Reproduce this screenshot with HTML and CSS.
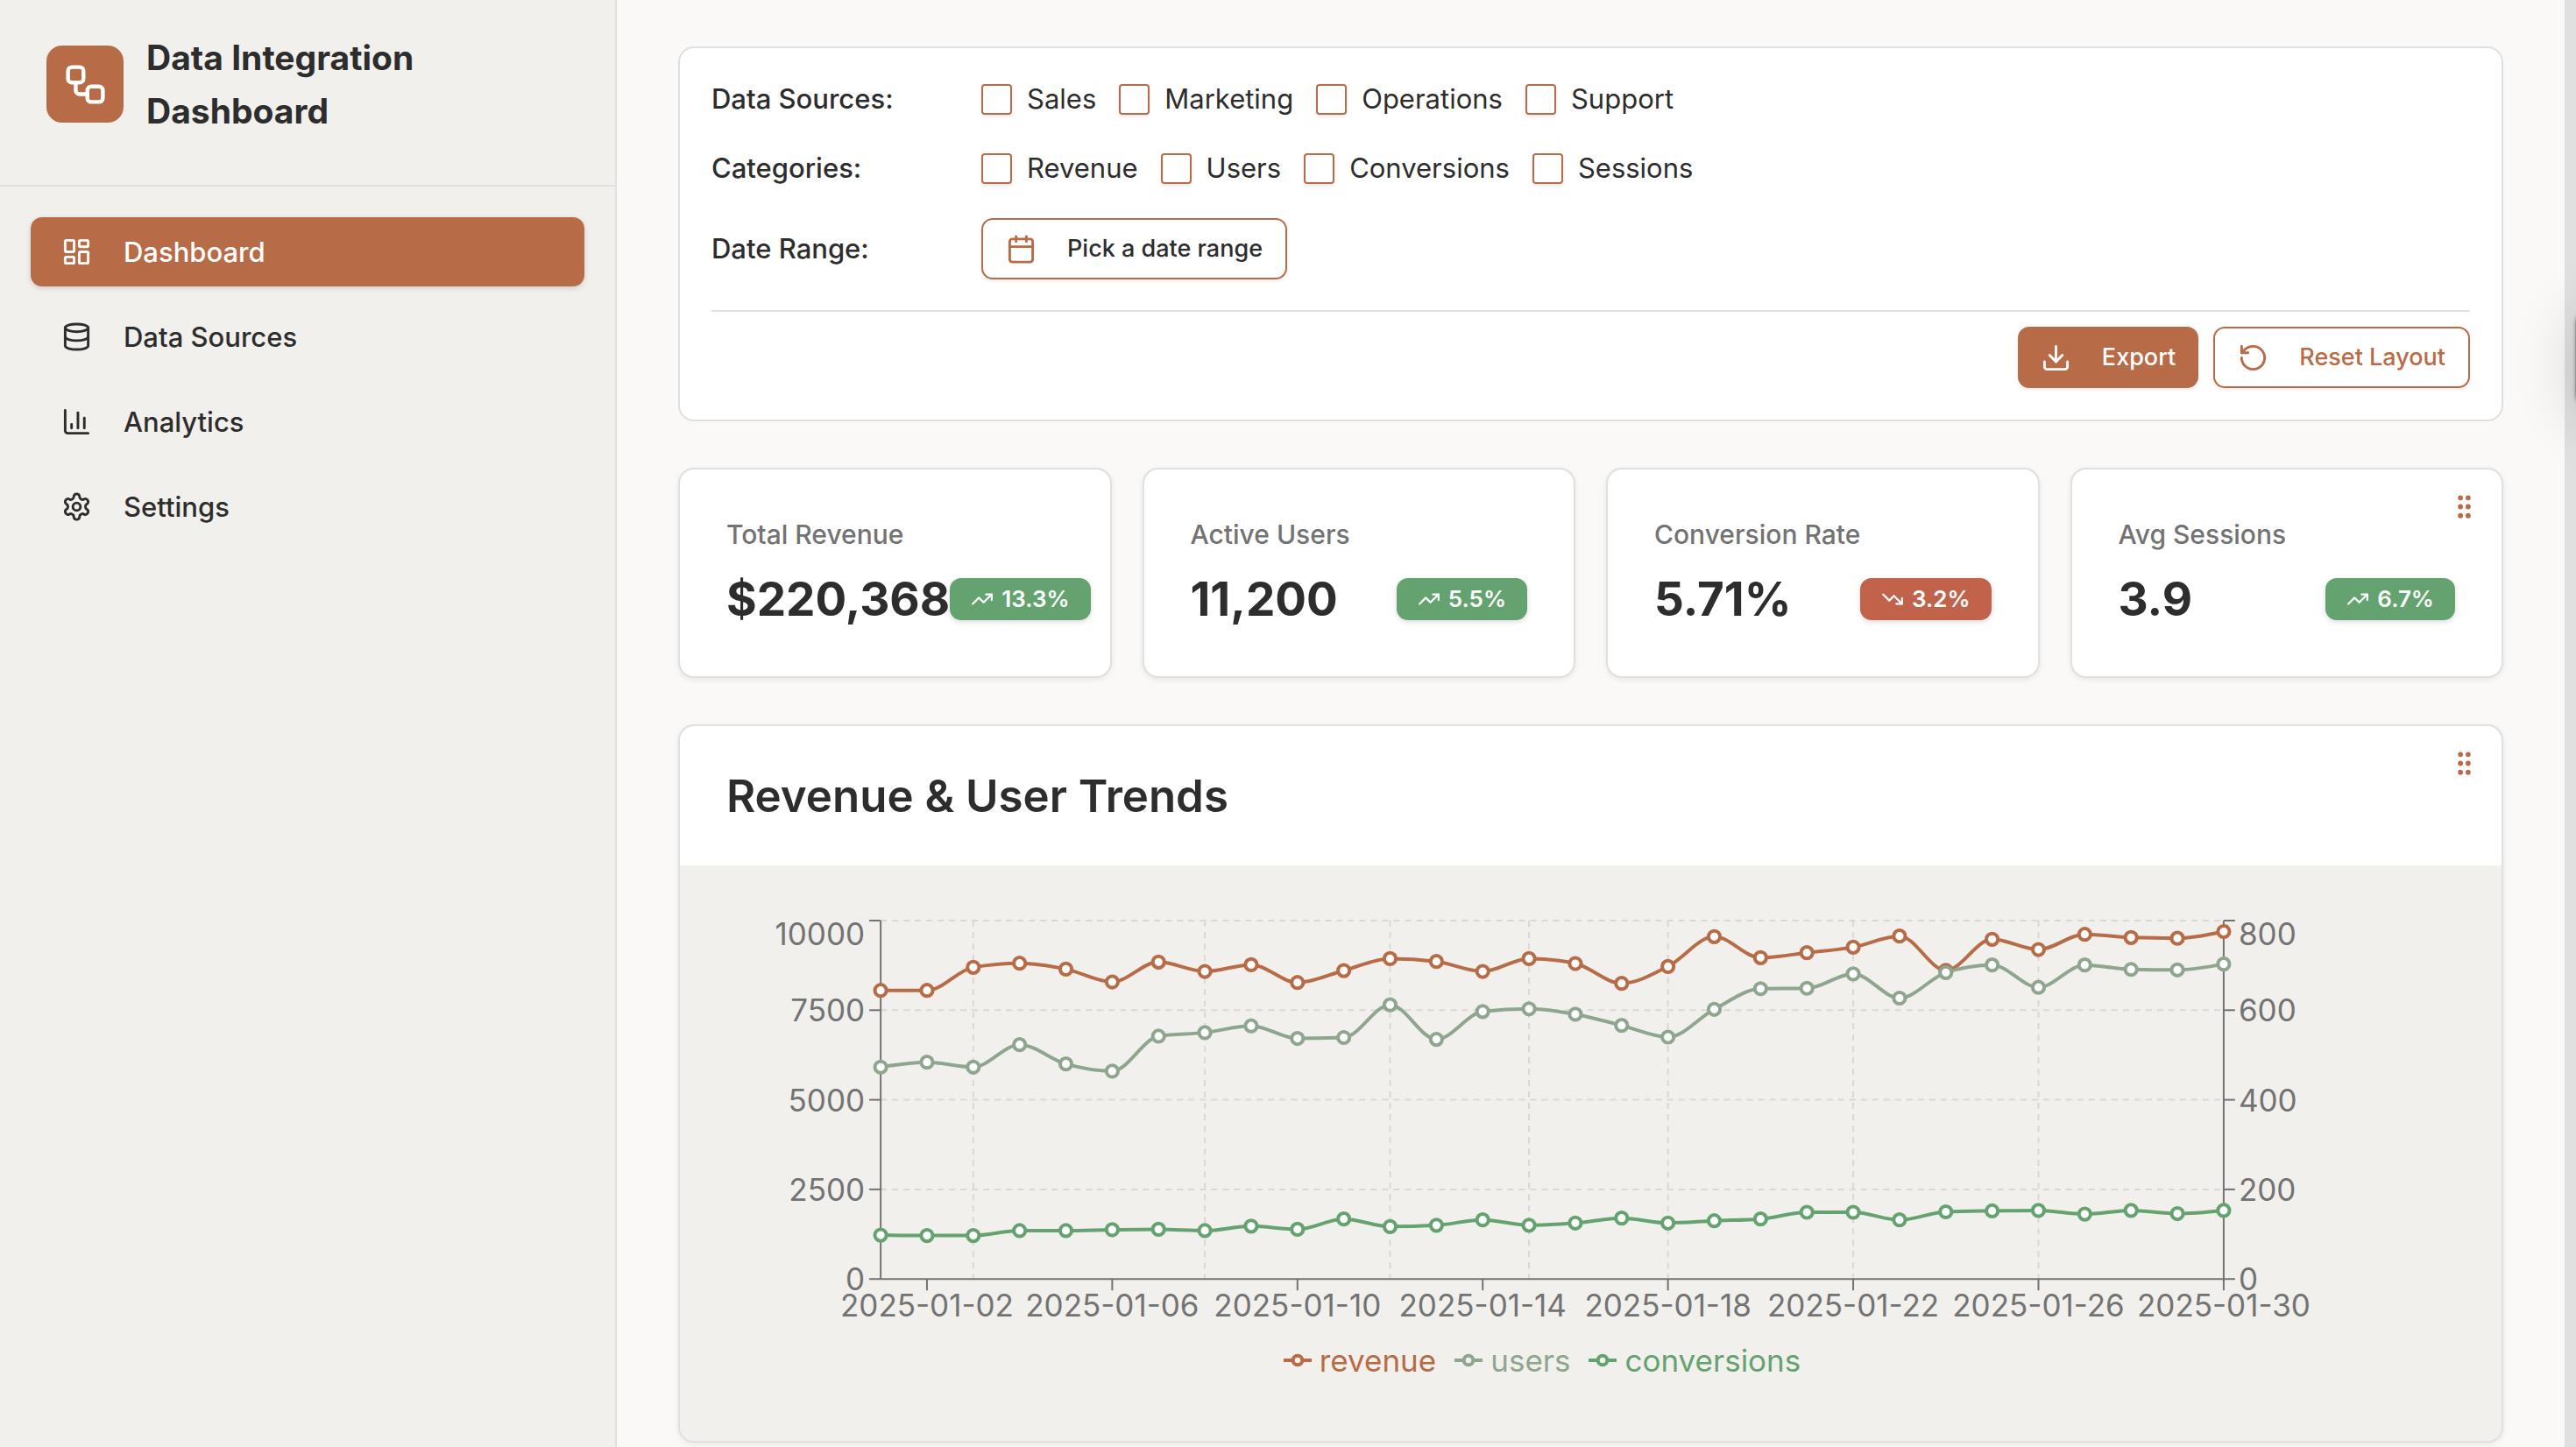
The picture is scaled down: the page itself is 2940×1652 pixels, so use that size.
FILE: index.html
```
<!DOCTYPE html>
<html lang="en">
<head>
  <meta charset="UTF-8">
  <meta name="viewport" content="width=device-width, initial-scale=1.0">
  <title>Data Integration Dashboard</title>
  <link rel="stylesheet" href="styles.css">
</head>
<body>

  <aside class="sidebar">
    <div class="brand">
      <div class="brand-logo">
        <svg class="icon-large" viewBox="0 0 24 24"><rect width="8" height="8" x="3" y="3" rx="2"/><path d="M7 11v4a2 2 0 0 0 2 2h4"/><rect width="8" height="8" x="13" y="13" rx="2"/></svg>
      </div>
      <h1>Data Integration Dashboard</h1>
    </div>
    <nav class="nav">
      <a class="nav-item active" href="#dashboard">
        <svg class="icon" viewBox="0 0 24 24"><rect width="7" height="9" x="3" y="3" rx="1"/><rect width="7" height="5" x="14" y="3" rx="1"/><rect width="7" height="9" x="14" y="12" rx="1"/><rect width="7" height="5" x="3" y="16" rx="1"/></svg>
        Dashboard
      </a>
      <a class="nav-item" href="#sources">
        <svg class="icon" viewBox="0 0 24 24"><ellipse cx="12" cy="5" rx="9" ry="3"/><path d="M3 5V19A9 3 0 0 0 21 19V5"/><path d="M3 12A9 3 0 0 0 21 12"/></svg>
        Data Sources
      </a>
      <a class="nav-item" href="#analytics">
        <svg class="icon" viewBox="0 0 24 24"><path d="M3 3v16a2 2 0 0 0 2 2h16"/><path d="M18 17V9"/><path d="M13 17V5"/><path d="M8 17v-3"/></svg>
        Analytics
      </a>
      <a class="nav-item" href="#settings">
        <svg class="icon" viewBox="0 0 24 24"><path d="M12.22 2h-.44a2 2 0 0 0-2 2v.18a2 2 0 0 1-1 1.73l-.43.25a2 2 0 0 1-2 0l-.15-.08a2 2 0 0 0-2.73.73l-.22.38a2 2 0 0 0 .73 2.73l.15.1a2 2 0 0 1 1 1.72v.51a2 2 0 0 1-1 1.74l-.15.09a2 2 0 0 0-.73 2.73l.22.38a2 2 0 0 0 2.73.73l.15-.08a2 2 0 0 1 2 0l.43.25a2 2 0 0 1 1 1.73V20a2 2 0 0 0 2 2h.44a2 2 0 0 0 2-2v-.18a2 2 0 0 1 1-1.73l.43-.25a2 2 0 0 1 2 0l.15.08a2 2 0 0 0 2.73-.73l.22-.39a2 2 0 0 0-.73-2.73l-.15-.08a2 2 0 0 1-1-1.74v-.5a2 2 0 0 1 1-1.74l.15-.09a2 2 0 0 0 .73-2.73l-.22-.38a2 2 0 0 0-2.73-.73l-.15.08a2 2 0 0 1-2 0l-.43-.25a2 2 0 0 1-1-1.73V4a2 2 0 0 0-2-2z"/><circle cx="12" cy="12" r="3"/></svg>
        Settings
      </a>
    </nav>
  </aside>

  <main class="main">
    <section class="card filters">
      <div class="filter-row">
        <span class="filter-label">Data Sources:</span>
        <div class="options">
          <label class="option"><input type="checkbox" name="source"> Sales</label>
          <label class="option"><input type="checkbox" name="source"> Marketing</label>
          <label class="option"><input type="checkbox" name="source"> Operations</label>
          <label class="option"><input type="checkbox" name="source"> Support</label>
        </div>
      </div>
      <div class="filter-row">
        <span class="filter-label">Categories:</span>
        <div class="options">
          <label class="option"><input type="checkbox" name="category"> Revenue</label>
          <label class="option"><input type="checkbox" name="category"> Users</label>
          <label class="option"><input type="checkbox" name="category"> Conversions</label>
          <label class="option"><input type="checkbox" name="category"> Sessions</label>
        </div>
      </div>
      <div class="filter-row">
        <span class="filter-label">Date Range:</span>
        <button class="button button-date" type="button">
          <svg class="icon" viewBox="0 0 24 24"><path d="M8 2v4"/><path d="M16 2v4"/><rect width="18" height="18" x="3" y="4" rx="2"/><path d="M3 10h18"/></svg>
          Pick a date range
        </button>
      </div>
      <div class="actions">
        <button class="button button-primary" type="button">
          <svg class="icon" viewBox="0 0 24 24"><path d="M21 15v4a2 2 0 0 1-2 2H5a2 2 0 0 1-2-2v-4"/><path d="m7 10 5 5 5-5"/><path d="M12 15V3"/></svg>
          Export
        </button>
        <button class="button" type="button">
          <svg class="icon" viewBox="0 0 24 24"><path d="M3 12a9 9 0 1 0 9-9 9.75 9.75 0 0 0-6.74 2.74L3 8"/><path d="M3 3v5h5"/></svg>
          Reset Layout
        </button>
      </div>
    </section>

    <section class="stats">
      <div class="card stat">
        <h2>Total Revenue</h2>
        <div class="stat-row">
          <span class="stat-value">$220,368</span>
          <span class="badge"><svg class="icon-small" viewBox="0 0 24 24"><path d="m22 7-8.5 8.5-5-5L2 17"/><path d="M16 7h6v6"/></svg>13.3%</span>
        </div>
      </div>
      <div class="card stat">
        <h2>Active Users</h2>
        <div class="stat-row">
          <span class="stat-value">11,200</span>
          <span class="badge"><svg class="icon-small" viewBox="0 0 24 24"><path d="m22 7-8.5 8.5-5-5L2 17"/><path d="M16 7h6v6"/></svg>5.5%</span>
        </div>
      </div>
      <div class="card stat">
        <h2>Conversion Rate</h2>
        <div class="stat-row">
          <span class="stat-value">5.71%</span>
          <span class="badge badge-down"><svg class="icon-small" viewBox="0 0 24 24"><path d="m22 17-8.5-8.5-5 5L2 7"/><path d="M16 17h6v-6"/></svg>3.2%</span>
        </div>
      </div>
      <div class="card stat">
        <h2>Avg Sessions</h2>
        <div class="stat-row">
          <span class="stat-value">3.9</span>
          <span class="badge"><svg class="icon-small" viewBox="0 0 24 24"><path d="m22 7-8.5 8.5-5-5L2 17"/><path d="M16 7h6v6"/></svg>6.7%</span>
        </div>
        <button class="drag-handle" type="button" aria-label="Move card">
          <svg class="icon grip" viewBox="0 0 24 24"><circle cx="9" cy="5" r="1"/><circle cx="9" cy="12" r="1"/><circle cx="9" cy="19" r="1"/><circle cx="15" cy="5" r="1"/><circle cx="15" cy="12" r="1"/><circle cx="15" cy="19" r="1"/></svg>
        </button>
      </div>
    </section>

    <section class="card chart-card">
      <h2>Revenue &amp; User Trends</h2>
      <button class="drag-handle" type="button" aria-label="Move chart">
        <svg class="icon grip" viewBox="0 0 24 24"><circle cx="9" cy="5" r="1"/><circle cx="9" cy="12" r="1"/><circle cx="9" cy="19" r="1"/><circle cx="15" cy="5" r="1"/><circle cx="15" cy="12" r="1"/><circle cx="15" cy="19" r="1"/></svg>
      </button>
      <div class="chart-body">
        <svg id="chart" class="chart" viewBox="0 0 1861 478"></svg>
        <ul class="legend">
          <li class="revenue"><svg class="legend-icon" viewBox="0 0 32 32"><path d="M0 16h10.7M21.3 16H32"/><circle cx="16" cy="16" r="5.3"/></svg>revenue</li>
          <li class="users"><svg class="legend-icon" viewBox="0 0 32 32"><path d="M0 16h10.7M21.3 16H32"/><circle cx="16" cy="16" r="5.3"/></svg>users</li>
          <li class="conversions"><svg class="legend-icon" viewBox="0 0 32 32"><path d="M0 16h10.7M21.3 16H32"/><circle cx="16" cy="16" r="5.3"/></svg>conversions</li>
        </ul>
      </div>
    </section>
  </main>

  <div class="scroll-track"></div>
  <div class="side-tab"></div>

  <script src="chart.js"></script>
</body>
</html>
```
FILE: styles.css
```
* {
  box-sizing: border-box;
}
body {
  margin: 0;
  min-height: 100vh;
  display: flex;
  overflow: hidden;
  background-color: #faf9f7;
  color: #2d2d2d;
  font-family: Inter, "Liberation Sans", sans-serif;
  font-size: 31px;
  line-height: 44px;
}
h1, h2, ul {
  margin: 0;
  padding: 0;
}
svg {
  fill: none;
  stroke: currentColor;
  stroke-width: 2;
  stroke-linecap: round;
  stroke-linejoin: round;
}
.icon {
  width: 35px;
  height: 35px;
  flex-shrink: 0;
}
.icon-large {
  width: 53px;
  height: 53px;
}
.icon-small {
  width: 26px;
  height: 26px;
}

/* sidebar */
.sidebar {
  width: 704px;
  flex-shrink: 0;
  background-color: #f2f0ec;
  border-right: 2px solid #e0e0e0;
}
.brand {
  display: flex;
  align-items: center;
  gap: 26px;
  padding: 35px 53px 54px;
  border-bottom: 2px solid #e0e0e0;
}
.brand-logo {
  display: flex;
  align-items: center;
  justify-content: center;
  width: 88px;
  height: 88px;
  flex-shrink: 0;
  border-radius: 18px;
  background-color: #b86b47;
  color: #ffffff;
}
.brand h1 {
  font-size: 39px;
  line-height: 61px;
  font-weight: 700;
}
.nav {
  display: flex;
  flex-direction: column;
  gap: 18px;
  padding: 35px;
}
.nav-item {
  display: flex;
  align-items: center;
  gap: 36px;
  height: 79px;
  padding: 0 35px;
  border-radius: 13px;
  color: #2d2d2d;
  font-weight: 500;
  text-decoration: none;
}
.nav-item.active {
  background-color: #b86b47;
  color: #ffffff;
  box-shadow: 0 2px 6px rgba(0, 0, 0, 0.15);
}

/* main column */
.main {
  flex: 1;
  min-width: 0;
  display: flex;
  flex-direction: column;
  gap: 53px;
  padding: 53px 83px 0 70px;
}
.card {
  position: relative;
  background-color: #ffffff;
  border: 2px solid #e0e0e0;
  border-radius: 18px;
}
.filters {
  display: flex;
  flex-direction: column;
  gap: 35px;
  padding: 36px;
}
.filter-row {
  display: flex;
  align-items: center;
}
.filter-label {
  width: 308px;
  font-weight: 500;
}
.options {
  display: flex;
  gap: 26px;
}
.option {
  display: flex;
  align-items: center;
  gap: 17px;
}
.option input {
  appearance: none;
  width: 35px;
  height: 35px;
  margin: 0;
  border: 2px solid #b86b47;
  border-radius: 4px;
  background-color: #ffffff;
  box-shadow: 0 2px 4px rgba(0, 0, 0, 0.1);
}
.button {
  display: flex;
  align-items: center;
  gap: 35px;
  height: 70px;
  padding: 0 26px;
  border: 2px solid #b86b47;
  border-radius: 13px;
  background-color: #ffffff;
  color: #b86b47;
  font: inherit;
  font-size: 27px;
  font-weight: 500;
  box-shadow: 0 2px 4px rgba(0, 0, 0, 0.08);
}
.button-date {
  color: #2d2d2d;
}
.button-date .icon {
  color: #b86b47;
}
.button-primary {
  border: none;
  background-color: #b86b47;
  color: #ffffff;
}
.actions {
  display: flex;
  justify-content: flex-end;
  gap: 17px;
  padding-top: 17px;
  border-top: 2px solid #e0e0e0;
}

/* stat cards */
.stats {
  display: grid;
  grid-template-columns: repeat(4, minmax(0, 1fr));
  gap: 35px;
}
.stat {
  padding: 53px;
  box-shadow: 0 2px 6px rgba(0, 0, 0, 0.08);
}
.stat h2 {
  margin-bottom: 17px;
  color: #737373;
  font-size: 30px;
  line-height: 43px;
  font-weight: 500;
}
.stat-row {
  display: flex;
  align-items: center;
  justify-content: space-between;
  height: 70px;
}
.stat-value {
  font-size: 53px;
  font-weight: 700;
}
.badge {
  display: flex;
  align-items: center;
  gap: 9px;
  flex-shrink: 0;
  height: 48px;
  padding: 0 24px;
  border-radius: 13px;
  background-color: #64a36f;
  color: #ffffff;
  font-size: 26px;
  font-weight: 600;
  box-shadow: 0 2px 6px rgba(0, 0, 0, 0.15);
}
.badge-down {
  background-color: #c1634b;
}
.drag-handle {
  position: absolute;
  top: 25px;
  right: 25px;
  display: flex;
  padding: 0;
  border: none;
  background: none;
  color: #b86b47;
}
.grip {
  fill: currentColor;
}

/* chart */
.chart-card {
  overflow: hidden;
  box-shadow: 0 2px 6px rgba(0, 0, 0, 0.08);
}
.chart-card h2 {
  padding: 53px;
  font-size: 51px;
  line-height: 53px;
  font-weight: 600;
}
.chart-body {
  padding: 53px 164px 70px 53px;
  background-color: #f2f0ec;
}
.chart {
  display: block;
  width: 100%;
  stroke-linecap: butt;
  font-size: 35px;
}
.chart text {
  fill: #737373;
  stroke: none;
}
.grid {
  stroke: #d9d8d6;
  stroke-dasharray: 7 6;
}
.axis {
  stroke: #737373;
}
.line {
  stroke-width: 4;
}
.dot {
  fill: #ffffff;
  stroke-width: 4;
}
.revenue {
  color: #b86b47;
}
.users {
  color: #8fa68e;
}
.conversions {
  color: #64a36f;
}
.legend {
  display: flex;
  justify-content: center;
  gap: 21px;
  padding-top: 12px;
  font-size: 35px;
  list-style: none;
}
.legend li {
  display: flex;
  align-items: center;
  gap: 9px;
}
.legend-icon {
  width: 32px;
  height: 32px;
  stroke-width: 4;
  stroke-linecap: butt;
}

/* right edge of the window */
.scroll-track {
  position: fixed;
  top: 0;
  right: 0;
  bottom: 0;
  width: 13px;
  background-color: #e0e0e0;
}
.side-tab {
  position: fixed;
  top: 350px;
  right: -119px;
  width: 120px;
  height: 120px;
  border-radius: 20px;
  background-color: #999999;
  box-shadow: 0 0 4px rgba(0, 0, 0, 0.3), 0 8px 70px rgba(0, 0, 0, 0.16);
}
```
FILE: chart.js
```
const revenue = [8052, 8052, 8696, 8810, 8647, 8289, 8843, 8582, 8769, 8272, 8606, 8940, 8859, 8582, 8940, 8802, 8248, 8720, 9552, 8965, 9104, 9258, 9568, 8610, 9478, 9193, 9616, 9528, 9508, 9695];
const users = [473, 484, 473, 523, 480, 464, 542, 550, 565, 537, 539, 612, 535, 597, 603, 591, 566, 540, 602, 648, 649, 681, 627, 684, 701, 651, 701, 691, 690, 703];
const conversions = [98, 97, 97, 108, 108, 110, 111, 108, 118, 111, 134, 117, 120, 132, 120, 125, 136, 125, 130, 134, 149, 149, 132, 150, 152, 153, 145, 153, 146, 153];

const chart = document.getElementById('chart');
const left = 176, right = 1708, top_ = 10, bottom = 419;

function add(name, attrs, text) {
  const el = document.createElementNS('http://www.w3.org/2000/svg', name);
  for (const key in attrs) el.setAttribute(key, attrs[key]);
  if (text !== undefined) el.textContent = text;
  chart.appendChild(el);
}

function xOf(i) {
  return left + (right - left) * i / 29;
}

function yOf(value, max) {
  return bottom - (bottom - top_) * value / max;
}

function hline(y, x1, x2, cls) {
  add('path', { d: `M${x1} ${y}H${x2}`, class: cls });
}

function vline(x, y1, y2, cls) {
  add('path', { d: `M${x} ${y1}V${y2}`, class: cls });
}

// monotone cubic curve, so the line never overshoots a point
function curve(pts) {
  const n = pts.length;
  const slope = [];
  const m = [];
  for (let i = 0; i < n - 1; i++) {
    slope.push((pts[i + 1][1] - pts[i][1]) / (pts[i + 1][0] - pts[i][0]));
  }
  for (let i = 1; i < n - 1; i++) {
    const a = slope[i - 1], b = slope[i];
    m[i] = (Math.sign(a) + Math.sign(b)) * Math.min(Math.abs(a), Math.abs(b), Math.abs(a + b) / 4) || 0;
  }
  m[0] = (3 * slope[0] - m[1]) / 2;
  m[n - 1] = (3 * slope[n - 2] - m[n - 2]) / 2;
  let d = `M${pts[0][0]} ${pts[0][1]}`;
  for (let i = 0; i < n - 1; i++) {
    const dx = (pts[i + 1][0] - pts[i][0]) / 3;
    d += `C${pts[i][0] + dx} ${pts[i][1] + dx * m[i]} ${pts[i + 1][0] - dx} ${pts[i + 1][1] - dx * m[i + 1]} ${pts[i + 1][0]} ${pts[i + 1][1]}`;
  }
  return d;
}

function series(values, max, cls) {
  const pts = values.map((v, i) => [xOf(i), yOf(v, max)]);
  add('path', { d: curve(pts), class: 'line ' + cls });
  pts.forEach(p => add('circle', { cx: p[0], cy: p[1], r: 6.6, class: 'dot ' + cls }));
}

// grid
for (let i = 1; i <= 4; i++) hline(yOf(i, 4), left, right, 'grid');
[3, 8, 12, 15, 18, 22, 26].forEach(day => vline(xOf(day - 1), top_, bottom, 'grid'));

// axes
hline(bottom, left, right, 'axis');
vline(left, top_, bottom, 'axis');
vline(right, top_, bottom, 'axis');
for (let i = 0; i <= 4; i++) {
  const y = yOf(i, 4);
  const labelY = i === 4 ? y + 28 : y + 13;
  hline(y, left - 13, left, 'axis');
  hline(y, right, right + 13, 'axis');
  add('text', { x: left - 18, y: labelY, 'text-anchor': 'end' }, i * 2500);
  add('text', { x: right + 17, y: labelY }, i * 200);
}
for (let day = 2; day <= 30; day += 4) {
  vline(xOf(day - 1), bottom, bottom + 13, 'axis');
  add('text', { x: xOf(day - 1), y: bottom + 43, 'text-anchor': 'middle' }, '2025-01-' + String(day).padStart(2, '0'));
}

series(revenue, 10000, 'revenue');
series(users, 800, 'users');
series(conversions, 800, 'conversions');
```
